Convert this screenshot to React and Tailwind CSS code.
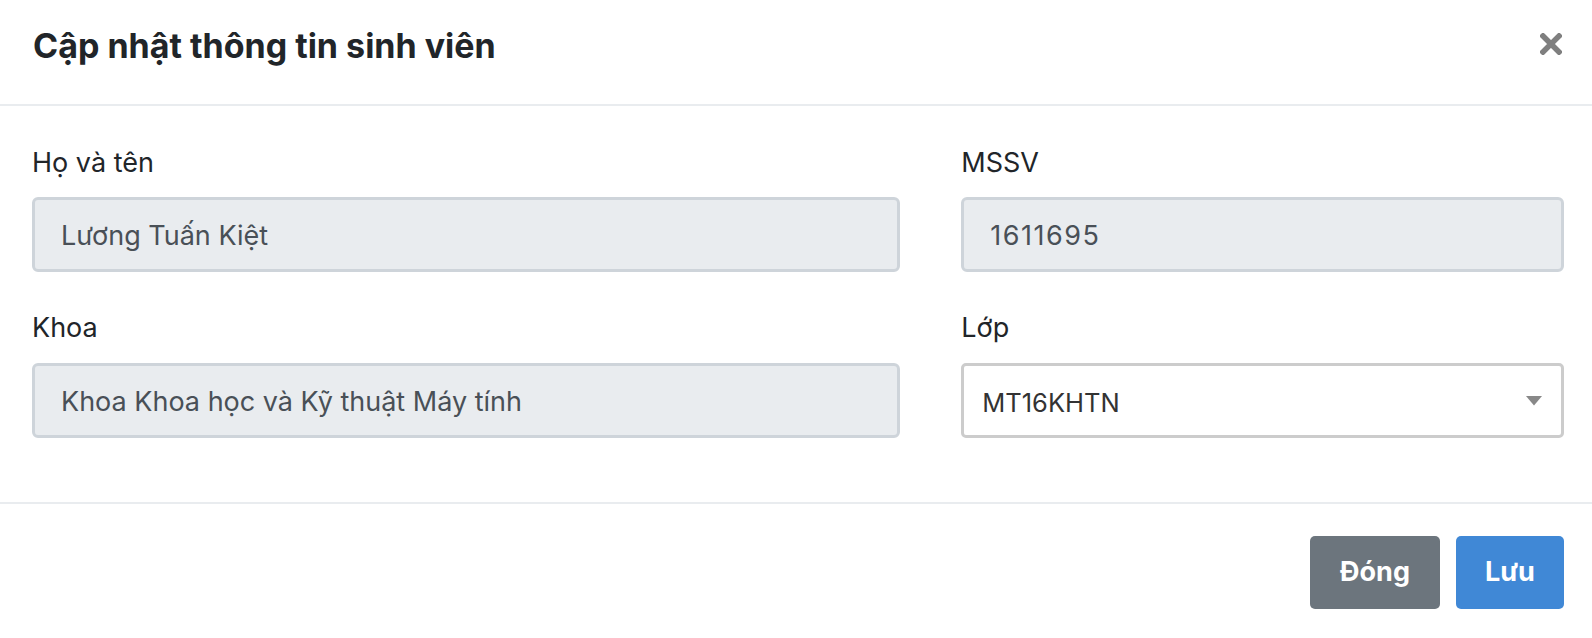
export default function App() {
  const inputCls =
    "h-[75px] w-full rounded-[6px] border-[3px] border-[#ced4da] bg-[#e9ecef] pl-[26px] pt-[4px] text-[27px] text-[#495057] flex items-center";
  const labelCls = "text-[27px] leading-[39px] text-[#212529]";
  return (
    <div className="w-[1592px] h-[638px] bg-white font-['Inter',sans-serif] overflow-hidden">
      <header className="flex h-[106px] items-start justify-between border-b-2 border-[#e9ecef] pl-[33px] pr-[30px] pt-[26px]">
        <h1 className="text-[34px] font-bold leading-[40px] text-[#212529]">
          Cập nhật thông tin sinh viên
        </h1>
        <svg width="22" height="22" viewBox="0 0 22 22" className="mt-[7px]">
          <path d="M3 3 L19 19 M19 3 L3 19" stroke="#7f7f7f" strokeWidth="5.5" strokeLinecap="square" fill="none" />
        </svg>
      </header>
      <div className="h-[396px] pl-[32px] pr-[28px] pt-[37px]">
        <div className="grid grid-cols-12 gap-x-[61px]">
          <div className="col-span-7 flex flex-col">
            <label className={labelCls}>Họ và tên</label>
            <div className={inputCls + " mt-[15px]"}>Lương Tuấn Kiệt</div>
            <label className={labelCls + " mt-[36px]"}>Khoa</label>
            <div className={inputCls + " mt-[16px]"}>Khoa Khoa học và Kỹ thuật Máy tính</div>
          </div>
          <div className="col-span-5 flex flex-col">
            <label className={labelCls}>MSSV</label>
            <div className={inputCls + " mt-[15px] tracking-[1.5px]"}>1611695</div>
            <label className={labelCls + " mt-[36px]"}>Lớp</label>
            <div className="mt-[16px] flex h-[75px] w-full items-center justify-between rounded-[5px] border-[3px] border-[#cccccc] bg-white pl-[18px] pr-[19px] text-[25.5px] text-[#333333]">
              <span className="pt-[5px]">MT16KHTN</span>
              <svg width="16" height="10" viewBox="0 0 16 10">
                <path d="M0 0 L16 0 L8 9.5 Z" fill="#888888" />
              </svg>
            </div>
          </div>
        </div>
      </div>
      <footer className="flex justify-end gap-[16px] border-t-2 border-[#e9ecef] pr-[28px] pt-[32px]">
        <button className="flex h-[73px] w-[130px] items-center justify-center rounded-[5px] bg-[#6c757d] text-[27px] font-bold text-white">
          Đóng
        </button>
        <button className="flex h-[73px] w-[108px] items-center justify-center rounded-[5px] bg-[#4088d6] text-[27px] font-bold text-white">
          Lưu
        </button>
      </footer>
    </div>
  );
}
